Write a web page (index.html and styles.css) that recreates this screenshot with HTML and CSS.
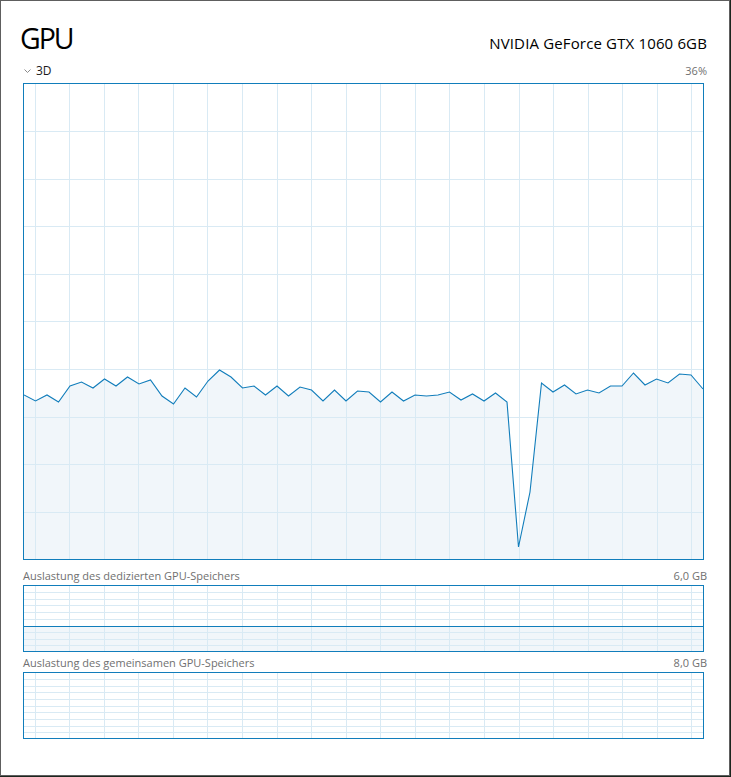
FILE: index.html
```html
<!DOCTYPE html>
<html lang="de">
<head>
<meta charset="utf-8">
<title>GPU</title>
<link rel="stylesheet" href="styles.css">
</head>
<body>
<div class="window">
  <header class="head">
    <h1 class="title">GPU</h1>
    <div class="model">NVIDIA GeForce GTX 1060 6GB</div>
  </header>

  <div class="caption caption-engine">
    <span class="engine"><svg class="chev" width="7" height="4" viewBox="0 0 7 4"><polyline points="0.5,0.5 3.5,3.5 6.5,0.5"/></svg>3D</span>
    <span class="value">36%</span>
  </div>

  <div class="chart chart-main">
    <svg class="plot" width="679" height="475" viewBox="0 0 679 475">
      <polygon class="area" points="0,311 11.5,317 23,311 34.5,318 46,302 57.5,298 69,304 80.5,295 92,302 103.5,293 115,300 126.5,296 138,312 149.5,320 161,304 172.5,313 184,297 195.5,286 207,293 218.5,304 230,302 241.5,311 253,302 264.5,312 276,303 287.5,306 299,317 310.5,306 322,317 333.5,307 345,308 356.5,318 368,308 379.5,317 391,311 402.5,312 414,311 425.5,308 437,316 448.5,310 460,317 471.5,309 483,318 494.5,463 506,408 517.5,299 529,308 540.5,301 552,310 563.5,306 575,309 586.5,302 598,302 609.5,289 621,301 632.5,295 644,299 655.5,290 667,291 679,305 679,475 0,475"/>
      <path class="grid" d="M11.5 0V475M45.5 0V475M80.5 0V475M114.5 0V475M149.5 0V475M183.5 0V475M218.5 0V475M253.5 0V475M287.5 0V475M322.5 0V475M356.5 0V475M391.5 0V475M425.5 0V475M460.5 0V475M495.5 0V475M529.5 0V475M564.5 0V475M598.5 0V475M633.5 0V475M667.5 0V475M0 47.5H679M0 95.5H679M0 142.5H679M0 190.5H679M0 237.5H679M0 285.5H679M0 333.5H679M0 380.5H679M0 428.5H679"/>
      <polyline class="line" points="0,311 11.5,317 23,311 34.5,318 46,302 57.5,298 69,304 80.5,295 92,302 103.5,293 115,300 126.5,296 138,312 149.5,320 161,304 172.5,313 184,297 195.5,286 207,293 218.5,304 230,302 241.5,311 253,302 264.5,312 276,303 287.5,306 299,317 310.5,306 322,317 333.5,307 345,308 356.5,318 368,308 379.5,317 391,311 402.5,312 414,311 425.5,308 437,316 448.5,310 460,317 471.5,309 483,318 494.5,463 506,408 517.5,299 529,308 540.5,301 552,310 563.5,306 575,309 586.5,302 598,302 609.5,289 621,301 632.5,295 644,299 655.5,290 667,291 679,305"/>
    </svg>
  </div>

  <div class="caption caption-mem caption-first">
    <span>Auslastung des dedizierten GPU-Speichers</span>
    <span>6,0 GB</span>
  </div>
  <div class="chart chart-mem">
    <svg class="plot" width="679" height="65" viewBox="0 0 679 65">
      <rect class="area" x="0" y="40" width="679" height="25"/>
      <path class="grid" d="M11.5 0V65M45.5 0V65M80.5 0V65M114.5 0V65M149.5 0V65M183.5 0V65M218.5 0V65M253.5 0V65M287.5 0V65M322.5 0V65M356.5 0V65M391.5 0V65M425.5 0V65M460.5 0V65M495.5 0V65M529.5 0V65M564.5 0V65M598.5 0V65M633.5 0V65M667.5 0V65M0 6.5H679M0 13.5H679M0 19.5H679M0 26.5H679M0 33.5H679M0 46.5H679M0 53.5H679M0 59.5H679"/>
      <path class="line crisp" d="M0 40.5H679"/>
    </svg>
  </div>

  <div class="caption caption-mem caption-second">
    <span>Auslastung des gemeinsamen GPU-Speichers</span>
    <span>8,0 GB</span>
  </div>
  <div class="chart chart-mem">
    <svg class="plot" width="679" height="65" viewBox="0 0 679 65">
      <path class="grid" d="M11.5 0V65M45.5 0V65M80.5 0V65M114.5 0V65M149.5 0V65M183.5 0V65M218.5 0V65M253.5 0V65M287.5 0V65M322.5 0V65M356.5 0V65M391.5 0V65M425.5 0V65M460.5 0V65M495.5 0V65M529.5 0V65M564.5 0V65M598.5 0V65M633.5 0V65M667.5 0V65M0 6.5H679M0 13.5H679M0 19.5H679M0 26.5H679M0 33.5H679M0 39.5H679M0 46.5H679M0 53.5H679M0 59.5H679"/>
    </svg>
  </div>
</div>
</body>
</html>
```

FILE: styles.css
```css
* {
  box-sizing: border-box;
}

html,
body {
  margin: 0;
  padding: 0;
}

body {
  width: 731px;
  height: 777px;
  overflow: hidden;
  background: #1c261e;
  font-family: "Open Sans", "Noto Sans", "DejaVu Sans", sans-serif;
  color: #000;
}

.window {
  width: 730px;
  height: 776px;
  border: 1px solid #5e5e5e;
  background: #fff;
  padding: 0 25px 0 22px;
}

.head {
  display: flex;
  justify-content: space-between;
  align-items: baseline;
  height: 62px;
  padding-top: 19px;
  margin-right: -3px;
}

.title {
  margin: 0 0 0 -3px;
  font-size: 28.5px;
  font-weight: 400;
  line-height: 36px;
  letter-spacing: -2px;
}

.model {
  font-size: 15px;
  line-height: 20px;
  letter-spacing: 0.15px;
}

.caption {
  display: flex;
  justify-content: space-between;
  align-items: baseline;
  margin-right: -3px;
}

.caption-engine {
  height: 20px;
  font-size: 12px;
  line-height: 16px;
}

.engine {
  display: flex;
  align-items: baseline;
  color: #1a1a1a;
}

.chev {
  margin: 0 5px 0 1px;
  align-self: center;
  fill: none;
  stroke: #8a8a8a;
  stroke-width: 1;
}

.value {
  font-size: 11px;
  color: #707070;
}

.chart {
  width: 681px;
  border: 1px solid #117dbb;
  background: #fff;
}

.chart-main {
  height: 477px;
}

.chart-mem {
  height: 67px;
}

.plot {
  display: block;
}

.area {
  fill: #f1f6fa;
}

.grid {
  fill: none;
  stroke: #d9eaf4;
  stroke-width: 1;
  shape-rendering: crispEdges;
}

.line {
  fill: none;
  stroke: #117dbb;
  stroke-width: 1.1;
  stroke-linejoin: miter;
}

.crisp {
  stroke-width: 1;
  shape-rendering: crispEdges;
}

.caption-mem {
  font-size: 11px;
  line-height: 15px;
  color: #707070;
}

.caption-first {
  height: 25px;
  padding-top: 8px;
}

.caption-second {
  height: 20px;
  padding-top: 3px;
}
```
